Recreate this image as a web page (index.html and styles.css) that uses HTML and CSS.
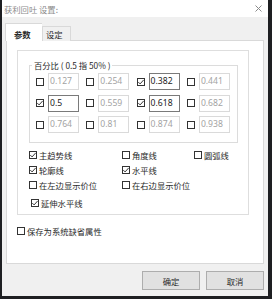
FILE: index.html
```html
<!DOCTYPE html>
<html lang="zh">
<head>
<meta charset="utf-8">
<title>获利回吐 设置:</title>
<link rel="stylesheet" href="styles.css">
</head>
<body>
<div class="dialog">
  <div class="titlebar">
    <span class="title">获利回吐 设置:</span>
    <svg class="close" width="7" height="7" viewBox="0 0 7 7"><path d="M0.5 0.5L6.5 6.5M6.5 0.5L0.5 6.5" stroke="#8a8a8a" stroke-width="1"/></svg>
  </div>
  <div class="tabs">
    <div class="tab active">参数</div>
    <div class="tab">设定</div>
  </div>
  <div class="panel">
    <div class="frame">
      <fieldset class="group">
        <legend>百分比 ( 0.5 指 50% )</legend>
        <div class="grid">
          <div class="cell"><span class="cb"></span><span class="num">0.127</span></div>
          <div class="cell"><span class="cb"></span><span class="num">0.254</span></div>
          <div class="cell"><span class="cb on"><svg viewBox="0 0 8 8"><path d="M1.3 4.1L3.1 5.9L6.7 1.9" fill="none" stroke="#222" stroke-width="0.9"/></svg></span><span class="num sel">0.382</span></div>
          <div class="cell"><span class="cb"></span><span class="num">0.441</span></div>
          <div class="cell"><span class="cb on"><svg viewBox="0 0 8 8"><path d="M1.3 4.1L3.1 5.9L6.7 1.9" fill="none" stroke="#222" stroke-width="0.9"/></svg></span><span class="num sel">0.5</span></div>
          <div class="cell"><span class="cb"></span><span class="num">0.559</span></div>
          <div class="cell"><span class="cb on"><svg viewBox="0 0 8 8"><path d="M1.3 4.1L3.1 5.9L6.7 1.9" fill="none" stroke="#222" stroke-width="0.9"/></svg></span><span class="num sel">0.618</span></div>
          <div class="cell"><span class="cb"></span><span class="num">0.682</span></div>
          <div class="cell"><span class="cb"></span><span class="num">0.764</span></div>
          <div class="cell"><span class="cb"></span><span class="num">0.81</span></div>
          <div class="cell"><span class="cb"></span><span class="num">0.874</span></div>
          <div class="cell"><span class="cb"></span><span class="num">0.938</span></div>
        </div>
      </fieldset>
      <div class="checks">
        <label class="chk"><span class="cb on"><svg viewBox="0 0 8 8"><path d="M1.3 4.1L3.1 5.9L6.7 1.9" fill="none" stroke="#222" stroke-width="0.9"/></svg></span>主趋势线</label>
        <label class="chk"><span class="cb"></span>角度线</label>
        <label class="chk"><span class="cb"></span>圆弧线</label>
        <label class="chk"><span class="cb on"><svg viewBox="0 0 8 8"><path d="M1.3 4.1L3.1 5.9L6.7 1.9" fill="none" stroke="#222" stroke-width="0.9"/></svg></span>轮廓线</label>
        <label class="chk"><span class="cb on"><svg viewBox="0 0 8 8"><path d="M1.3 4.1L3.1 5.9L6.7 1.9" fill="none" stroke="#222" stroke-width="0.9"/></svg></span>水平线</label>
        <span></span>
        <label class="chk"><span class="cb"></span>在左边显示价位</label>
        <label class="chk wide"><span class="cb"></span>在右边显示价位</label>
      </div>
      <label class="chk extend"><span class="cb on"><svg viewBox="0 0 8 8"><path d="M1.3 4.1L3.1 5.9L6.7 1.9" fill="none" stroke="#222" stroke-width="0.9"/></svg></span>延伸水平线</label>
    </div>
    <label class="chk save"><span class="cb"></span>保存为系统缺省属性</label>
  </div>
  <div class="buttons">
    <div class="btn">确定</div>
    <div class="btn">取消</div>
  </div>
</div>
</body>
</html>
```
FILE: styles.css
```css
html, body {
  margin: 0;
  padding: 0;
}
body {
  width: 272px;
  height: 299px;
  overflow: hidden;
  background: #1e1f22;
  font-family: "Noto Sans CJK SC", "Noto Sans", sans-serif;
  font-size: 8.3px;
  color: #2a2a2a;
}
.dialog {
  margin-left: 2px;
  width: 266px;
  height: 296px;
  background: #f0f0f0;
  display: flex;
  flex-direction: column;
}
.titlebar {
  height: 17px;
  background: #fff;
  display: flex;
  align-items: center;
  justify-content: space-between;
  padding: 0 6px 0 2px;
  box-sizing: border-box;
}
.title {
  color: #8c8c8c;
  font-size: 8.3px;
  line-height: 10px;
  padding-top: 1px;
}
.close {
  display: block;
  margin-top: -1px;
}
.tabs {
  display: flex;
  align-items: flex-end;
  margin-top: 6px;
  padding-left: 3px;
  position: relative;
  z-index: 1;
  margin-bottom: -1px;
}
.tab {
  box-sizing: border-box;
  height: 15px;
  width: 29px;
  border: 1px solid #d9d9d9;
  border-bottom: none;
  background: #f0f0f0;
  display: flex;
  align-items: center;
  padding-left: 3px;
  line-height: 10px;
}
.tab.active {
  height: 18px;
  width: 37px;
  background: #fff;
  padding-left: 8px;
  padding-top: 2px;
  font-weight: bold;
  border-right: none;
}
.panel {
  margin-left: 4px;
  width: 258px;
  height: 224px;
  box-sizing: border-box;
  background: #fff;
  border: 1px solid #d9d9d9;
  padding: 9px 0 0 10px;
}
.frame {
  box-sizing: border-box;
  width: 232px;
  height: 165px;
  border: 1px solid #dedede;
  padding: 0 0 0 11px;
}
.group {
  box-sizing: border-box;
  margin: 9px 0 0 0;
  width: 208px;
  height: 83px;
  border: 1px solid #dcdcdc;
  padding: 3px 0 0 6px;
}
.group legend {
  padding: 0 2px;
  margin-left: -4px;
  line-height: 10px;
  font-size: 8.3px;
}
.grid {
  display: grid;
  grid-template-columns: repeat(4, 50.3px);
  grid-auto-rows: 17px;
  row-gap: 4.5px;
}
.cell {
  display: flex;
  align-items: center;
}
.cb {
  box-sizing: border-box;
  width: 8px;
  height: 8px;
  border: 1px solid #333;
  background: #fff;
  flex: none;
  position: relative;
}
.cb svg {
  position: absolute;
  left: -1px;
  top: -1px;
  width: 8px;
  height: 8px;
}
.num {
  box-sizing: border-box;
  margin-left: 4px;
  width: 31px;
  height: 17px;
  border: 1px solid #dadada;
  color: #a3a3a3;
  font-family: "Noto Sans", "Liberation Sans", sans-serif;
  font-size: 8.6px;
  line-height: 15px;
  padding-left: 1px;
}
.num.sel {
  border-color: #7a7a7a;
  color: #222;
}
.checks {
  display: grid;
  grid-template-columns: 93px 72px auto;
  grid-auto-rows: 12px;
  row-gap: 3px;
  margin-top: 6px;
}
.chk {
  display: flex;
  align-items: center;
  line-height: 12px;
  white-space: nowrap;
}
.chk .cb {
  margin-right: 2px;
}
.wide {
  grid-column: span 2;
}
.extend {
  height: 12px;
  margin: 6px 0 0 2px;
}
.save {
  height: 12px;
  margin-top: 10px;
}
.buttons {
  display: flex;
  justify-content: flex-end;
  gap: 6px;
  margin-top: 7px;
  padding-right: 4px;
}
.btn {
  box-sizing: border-box;
  width: 58px;
  height: 19px;
  background: #e1e1e1;
  border: 1px solid #adadad;
  display: flex;
  align-items: center;
  justify-content: center;
  line-height: 10px;
}
```
